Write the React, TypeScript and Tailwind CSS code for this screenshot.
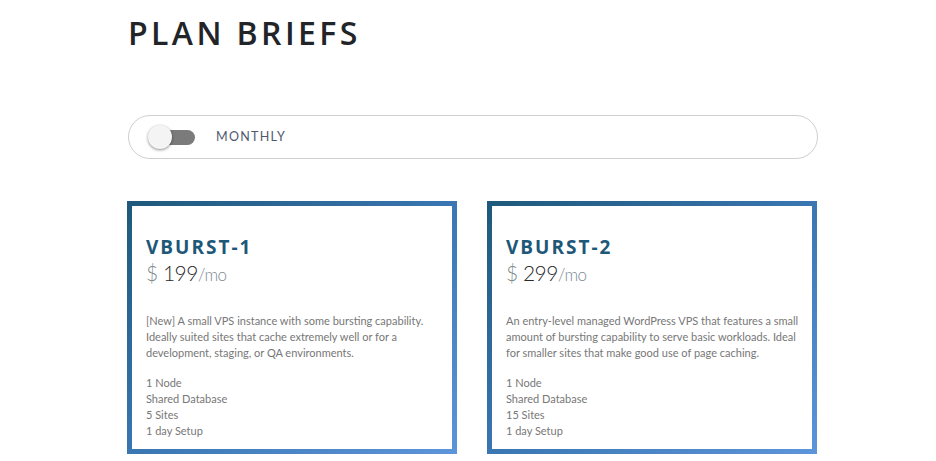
import React, { useState } from 'react';

interface Plan {
  name: string;
  price: string;
  description: string;
  features: string[];
}

const plans: Plan[] = [
  {
    name: 'VBURST-1',
    price: '199',
    description:
      '[New] A small VPS instance with some bursting capability. Ideally suited sites that cache extremely well or for a development, staging, or QA environments.',
    features: ['1 Node', 'Shared Database', '5 Sites', '1 day Setup'],
  },
  {
    name: 'VBURST-2',
    price: '299',
    description:
      'An entry-level managed WordPress VPS that features a small amount of bursting capability to serve basic workloads. Ideal for smaller sites that make good use of page caching.',
    features: ['1 Node', 'Shared Database', '15 Sites', '1 day Setup'],
  },
];

const PlanCard: React.FC<{ plan: Plan }> = ({ plan }) => (
  <div className="w-[330px] h-[253px] p-[5px] bg-gradient-to-br from-[#1e597b] via-[#3a76b2] to-[#5c95da]">
    <div className="bg-white h-full pt-[29px] pl-[14px] pr-[8px]">
      <h3 className="font-['Open_Sans',sans-serif] font-bold text-[19px] leading-[24px] tracking-[2px] text-[#1e5878]">
        {plan.name}
      </h3>
      <div className="font-['Lato',sans-serif] font-light text-[21px] leading-[26px] mt-[1px] text-[#2a2a2a] tracking-[-0.5px]">
        <span className="text-[#7e8a8e]">$ </span>
        {plan.price}
        <span className="text-[17px] text-[#7e8a94]">/mo</span>
      </div>
      <p className="font-['Lato',sans-serif] text-[11px] leading-[16px] text-[#777] mt-[25px]">
        {plan.description}
      </p>
      <ul className="font-['Lato',sans-serif] text-[11px] leading-[16px] text-[#777] mt-[14px]">
        {plan.features.map((f) => (
          <li key={f}>{f}</li>
        ))}
      </ul>
    </div>
  </div>
);

export default function App() {
  const [yearly, setYearly] = useState(false);

  return (
    <div className="bg-white w-[936px] h-[461px] overflow-hidden">
      <div className="ml-[128px] w-[690px]">
        <h1 className="pt-[13px] font-['Open_Sans',sans-serif] font-semibold text-[32px] leading-[40px] tracking-[3.4px] text-[#222428]">
          PLAN BRIEFS
        </h1>

        <div className="mt-[62px] h-[44px] rounded-full border border-[#cfcfcf] flex items-center pl-[19px]">
          <button
            onClick={() => setYearly(!yearly)}
            className="relative w-[47px] h-[24px] flex items-center"
          >
            <span className="absolute left-[4px] right-0 h-[15px] rounded-full bg-[#7b7b7b]" />
            <span
              className={
                yearly
                  ? 'absolute left-[23px] w-[24px] h-[24px] rounded-full bg-[#f4f4f4] shadow-[0_1px_3px_rgba(0,0,0,0.45)]'
                  : 'absolute left-0 w-[24px] h-[24px] rounded-full bg-[#f4f4f4] shadow-[0_1px_3px_rgba(0,0,0,0.45)]'
              }
            />
          </button>
          <span className="ml-[21px] font-['Lato',sans-serif] text-[12.5px] tracking-[1.3px] text-[#4e5a6e]">
            {yearly ? 'YEARLY' : 'MONTHLY'}
          </span>
        </div>

        <div className="mt-[42px] flex gap-[30px] -ml-[1px]">
          {plans.map((p) => (
            <PlanCard key={p.name} plan={p} />
          ))}
        </div>
      </div>
    </div>
  );
}
